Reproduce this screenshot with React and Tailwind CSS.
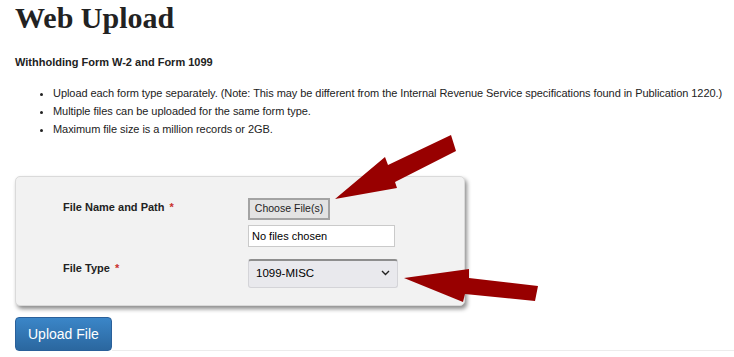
import { useState } from 'react';

const arial = { fontFamily: '"Liberation Sans", Arial, sans-serif' };

// Las dos flechas rojas que senalan el boton y el selector.
function Flechas() {
  return (
    <svg className="pointer-events-none absolute left-0 top-0" width="734" height="357" viewBox="0 0 734 357">
      <polygon points="335,199 385,157 388,165 451,135 456,151 395,182 397,188" fill="#980000" />
      <polygon points="404,278 469,269 469,278 538,286 535,301 465,294 463,302" fill="#980000" />
    </svg>
  );
}

function Etiqueta({ texto }) {
  return (
    <div className="pt-[1px] text-[11px] font-bold leading-4 text-[#222]">
      {texto}
      <span className="ml-[5px] text-[#c9302c]">*</span>
    </div>
  );
}

export default function App() {
  const [tipo, setTipo] = useState('1099-MISC');

  return (
    <div className="relative h-[357px] w-[734px] overflow-hidden bg-white pl-[15px] text-[#222]" style={arial}>
      <h1
        className="mt-[1px] text-[30px] font-bold leading-[33px] text-[#222]"
        style={{ fontFamily: '"Liberation Serif", "Times New Roman", serif' }}
      >
        Web Upload
      </h1>

      <p className="mt-[20px] text-[11px] font-bold leading-4">Withholding Form W-2 and Form 1099</p>

      <ul className="mt-[14px] list-disc pl-[38px] text-[11px] leading-[18px] tracking-[-0.06px]">
        <li>
          Upload each form type separately. (Note: This may be different from the Internal Revenue Service
          specifications found in Publication 1220.)
        </li>
        <li>Multiple files can be uploaded for the same form type.</li>
        <li>Maximum file size is a million records or 2GB.</li>
      </ul>

      <div className="mt-[38px] w-[450px] rounded-[5px] border border-[#dadada] bg-[#f2f2f2] pb-[17px] pl-[47px] pt-[21px] shadow-[2px_3px_4px_rgba(0,0,0,0.45)]">
        <div className="grid grid-cols-[185px_auto] gap-y-[12px]">
          <Etiqueta texto="File Name and Path" />
          <div className="flex flex-col gap-[5px]">
            <button className="h-[22px] w-[82px] border-2 border-[#a3a3a3] bg-[#e3e3e3] text-[10.5px] text-[#222]">
              Choose File(s)
            </button>
            <div className="flex h-[22px] w-[147px] items-center border border-[#cacaca] bg-white pl-[3px] text-[11px] text-black">
              No files chosen
            </div>
          </div>

          <Etiqueta texto="File Type" />
          <div className="relative h-[29px] w-[150px]">
            <select
              value={tipo}
              onChange={(evento) => setTipo(evento.target.value)}
              className="h-full w-full appearance-none rounded-[3px] border border-[#d4d4d8] border-t-2 border-t-[#8e8e8e] bg-[#e9e9ed] pl-[7px] text-[11.5px] text-black outline-none"
            >
              <option>1099-MISC</option>
              <option>1099-NEC</option>
              <option>W-2</option>
            </select>
            <svg className="pointer-events-none absolute right-[8px] top-[11px]" width="9" height="6" viewBox="0 0 9 6">
              <path d="M1 1l3.5 3.5L8 1" fill="none" stroke="#222" strokeWidth="1.4" />
            </svg>
          </div>
        </div>
      </div>

      <div className="mt-[11px] flex items-end">
        <button className="h-[34px] rounded-[4px] border border-[#2a609a] bg-linear-to-b from-[#3b86c8] to-[#2b679f] px-[12px] text-[14px] text-white">
          Upload File
        </button>
        <div className="h-px flex-1 bg-[#ececec]" />
      </div>

      <Flechas />
    </div>
  );
}
